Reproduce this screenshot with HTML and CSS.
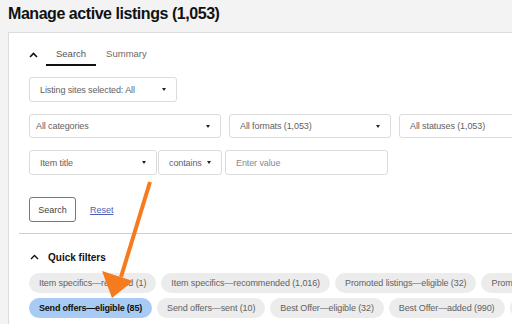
FILE: index.html
```html
<!DOCTYPE html>
<html lang="en">
<head>
    <meta charset="UTF-8">
    <meta name="viewport" content="width=device-width, initial-scale=1.0">
    <link rel="stylesheet" href="styles.css">
</head>
<body>
    <h1 class="page-title">Manage active listings (1,053)</h1>

    <div class="panel">
        <!-- Search section -->
        <div class="search-section">
            <div class="tabs">
                <svg class="chevron" width="9" height="6" viewBox="0 0 9 6"><path d="M1 5 L4.5 1.5 L8 5" fill="none" stroke="#111" stroke-width="1.6"/></svg>
                <div class="tab active">Search</div>
                <div class="tab">Summary</div>
            </div>

            <div class="field-row first">
                <div class="select w-sites">Listing sites selected: All <span class="caret"></span></div>
            </div>

            <div class="field-row gap-8">
                <div class="select w-cat pad-6">All categories <span class="caret"></span></div>
                <div class="select w-fmt">All formats (1,053) <span class="caret"></span></div>
                <div class="select w-status">All statuses (1,053)</div>
            </div>

            <div class="field-row">
                <div class="select w-item">Item title <span class="caret"></span></div>
                <div class="select w-contains">contains <span class="caret"></span></div>
                <div class="select w-value placeholder">Enter value</div>
            </div>

            <div class="actions">
                <button type="button" class="search-btn">Search</button>
                <a class="reset-link">Reset</a>
            </div>
        </div>

        <!-- Quick filters -->
        <div class="quick-filters">
            <div class="qf-header">
                <svg class="chevron" width="9" height="6" viewBox="0 0 9 6"><path d="M1 5 L4.5 1.5 L8 5" fill="none" stroke="#111" stroke-width="1.4"/></svg>
                <span>Quick filters</span>
            </div>
            <div class="chip-row">
                <span class="chip">Item specifics—required (1)</span>
                <span class="chip">Item specifics—recommended (1,016)</span>
                <span class="chip">Promoted listings—eligible (32)</span>
                <span class="chip">Promoted listings—added (0)</span>
            </div>
            <div class="chip-row">
                <span class="chip selected">Send offers—eligible (85)</span>
                <span class="chip">Send offers—sent (10)</span>
                <span class="chip">Best Offer—eligible (32)</span>
                <span class="chip">Best Offer—added (990)</span>
                <span class="chip">Volume pricing (0)</span>
            </div>
        </div>
    </div>

    <!-- annotation arrow -->
    <svg class="arrow" width="512" height="324" viewBox="0 0 512 324">
        <line x1="150" y1="182" x2="121" y2="277" stroke="#f57b1e" stroke-width="4"/>
        <polygon points="102,271 133,281 112,298" fill="#f57b1e"/>
    </svg>
</body>
</html>
```

FILE: styles.css
```css
:root {
    --border: #dcdcdc;
    --text: #626262;
    --chip-bg: #ececec;
    --chip-blue: #a8cbf5;
}

body {
    font-family: "Liberation Sans", Arial, sans-serif;
    background-color: #f3f3f3;
    margin: 0;
    width: 512px;
    height: 324px;
    overflow: hidden;
    position: relative;
}

.page-title {
    margin: 0;
    padding: 4px 8px 0;
    height: 28px;
    font-size: 16px;
    line-height: 20px;
    letter-spacing: -0.45px;
    color: #111;
}

.panel {
    margin-left: 8px;
    width: 700px;
    background: #fff;
    border: 1px solid var(--border);
    padding: 0 10px;
}

.search-section {
    padding: 10px 10px 11px;
    border-bottom: 1px solid #cfcfcf;
}

.tabs {
    display: flex;
    align-items: center;
    height: 23px;
}

.chevron {
    display: block;
    margin-right: 8px;
}

.tab {
    font-size: 9.5px;
    color: #6a6a6a;
    padding: 0 10px;
    height: 23px;
    line-height: 21px;
    box-sizing: border-box;
}

.tab.active {
    color: #555;
    border-bottom: 2px solid #111;
}

.field-row {
    display: flex;
    margin-top: 12px;
    gap: 1px;
}

.field-row.first {
    margin-top: 11px;
}

.field-row.gap-8 {
    gap: 8px;
}

.select {
    box-sizing: border-box;
    height: 25px;
    border: 1px solid var(--border);
    border-radius: 3px;
    display: flex;
    align-items: center;
    justify-content: space-between;
    padding: 0 10px;
    font-size: 9px;
    letter-spacing: -0.1px;
    color: var(--text);
    flex-shrink: 0;
}

.pad-6 { padding-left: 6px; }

.caret {
    width: 0;
    height: 0;
    border-left: 2.5px solid transparent;
    border-right: 2.5px solid transparent;
    border-top: 3px solid #222;
}

.w-sites { width: 148px; height: 25px; }
.w-cat { width: 192px; height: 24px; }
.w-fmt { width: 162px; height: 24px; }
.w-status { width: 200px; height: 24px; }
.w-item { width: 128px; }
.w-contains { width: 64px; }
.w-value { width: 163px; margin-left: 2px; }

.placeholder { color: #8a8a8a; }

.actions {
    display: flex;
    align-items: center;
    margin-top: 22px;
    gap: 14px;
}

.search-btn {
    font-family: inherit;
    height: 25px;
    width: 47px;
    padding: 0;
    background: #fff;
    border: 1px solid #777;
    border-radius: 3px;
    font-size: 9px;
    color: #444;
}

.reset-link {
    font-size: 9px;
    color: #5060b8;
    text-decoration: underline;
}

.quick-filters {
    padding: 15px 10px 10px;
}

.qf-header {
    display: flex;
    align-items: center;
    height: 16px;
    font-size: 10px;
    font-weight: bold;
    color: #111;
}

.qf-header .chevron {
    margin: 0 9px 0 1px;
}

.chip-row {
    display: flex;
    gap: 5px;
    margin-top: 5px;
    white-space: nowrap;
}

.qf-header + .chip-row {
    margin-top: 8px;
}

.chip {
    flex-shrink: 0;
    height: 20px;
    line-height: 20px;
    padding: 0 10px;
    border-radius: 10px;
    background: var(--chip-bg);
    font-size: 9px;
    letter-spacing: -0.1px;
    color: var(--text);
}

.chip.selected {
    background: var(--chip-blue);
    color: #111;
    font-weight: bold;
    letter-spacing: -0.2px;
}

.arrow {
    position: absolute;
    left: 0;
    top: 0;
    pointer-events: none;
}
```
